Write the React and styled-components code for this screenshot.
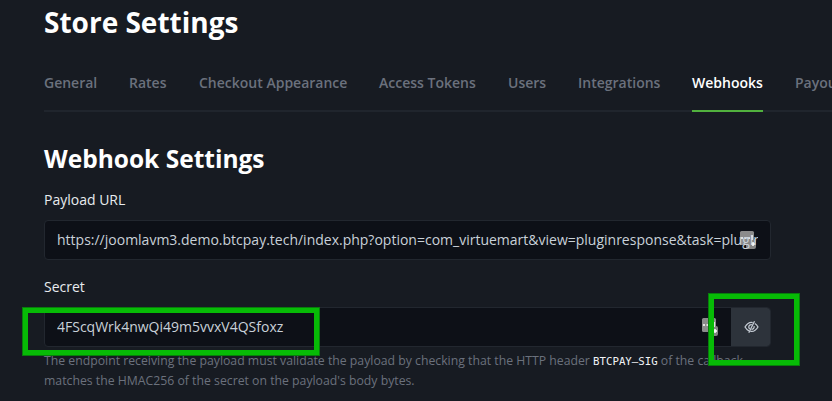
import React from "react";
import styled, { createGlobalStyle } from "styled-components";

const GlobalStyle = createGlobalStyle`
  * { box-sizing: border-box; }
  html, body { margin: 0; background: #171b22; overflow: hidden; }
`;

const Page = styled.main`
  position: relative;
  width: 832px;
  height: 401px;
  overflow: hidden;
  padding: 2px 0 0 44px;
  background: #171b22;
  color: #fff;
  font-family: "Open Sans", "Noto Sans", sans-serif;
  font-size: 14px;
`;

const Title = styled.h1`
  margin: 0;
  font-size: 28px;
  line-height: 40px;
  font-weight: 700;
  white-space: nowrap;
`;

const Tabs = styled.nav`
  display: flex;
  gap: 32px;
  height: 54px;
  margin-top: 16px;
  border-bottom: 2px solid #20252d;
`;

const Tab = styled.a`
  flex: none;
  width: ${(p) => p.$width}px;
  height: 54px;
  padding-top: 15px;
  line-height: 20px;
  font-weight: 600;
  white-space: nowrap;
  color: ${(p) => (p.$active ? "#fff" : "#6b717d")};
  border-bottom: 2px solid ${(p) => (p.$active ? "#51b13e" : "transparent")};
`;

const Heading = styled.h2`
  margin: 29px 0 0;
  font-size: 24.5px;
  line-height: 36px;
  font-weight: 700;
`;

const Field = styled.div`
  width: 727px;
  margin-top: ${(p) => p.$gap}px;
`;

const Label = styled.label`
  display: block;
  height: 30px;
  line-height: 20px;
  color: #e8ebef;
`;

const InputGroup = styled.div`
  display: flex;
  height: 40px;
  border: 1px solid #22272f;
  border-radius: 4px;
  background: #0d1017;
  overflow: hidden;
`;

const InputArea = styled.div`
  position: relative;
  flex: 1;
  min-width: 0;
  padding: 0 12px;
`;

const Value = styled.div`
  position: relative;
  z-index: 1;
  overflow: hidden;
  white-space: nowrap;
  line-height: 38px;
  color: #c9d1d9;
`;

const ManagerIcon = styled.svg`
  position: absolute;
  right: ${(p) => p.$right}px;
  top: 9px;
  width: 17px;
  height: 19px;
`;

const ToggleButton = styled.button`
  display: flex;
  align-items: center;
  justify-content: center;
  width: 39px;
  padding: 0 0 0 1px;
  border: 0;
  background: #2d333b;
  color: #c5ccd4;
`;

const Help = styled.p`
  width: 727px;
  margin: 4px 0 0;
  font-size: 12.25px;
  line-height: 20px;
  color: #6b717d;
  white-space: nowrap;
`;

const Code = styled.code`
  font-family: "DejaVu Sans Mono", monospace;
  font-size: 10.72px;
  line-height: 1;
  color: #f0f3f6;
`;

const Highlight = styled.div`
  position: absolute;
  z-index: 2;
  left: ${(p) => p.$x}px;
  top: ${(p) => p.$y}px;
  width: ${(p) => p.$w}px;
  height: ${(p) => p.$h}px;
  border: 6px solid #07bb06;
  outline: 1px solid #087e0c;
  outline-offset: -1px;
`;

const tabs = [
  ["General", 53],
  ["Rates", 38],
  ["Checkout Appearance", 148],
  ["Access Tokens", 97],
  ["Users", 38],
  ["Integrations", 82],
  ["Webhooks", 71],
  ["Payouts", 54],
];

function PasswordManager({ right }) {
  return (
    <ManagerIcon $right={right} viewBox="0 0 17 19" aria-hidden="true">
      <rect x="1" y="1" width="14" height="14" rx="1.5" fill="#8b8b8b" />
      <rect x="7" y="9" width="10" height="10" rx="2" fill="#858585" />
      <path d="M2 8h2M5.5 8h2M9 8h2M13 5v5M12 14h4M14 12v4" fill="none" stroke="#fff" strokeWidth="1.5" />
    </ManagerIcon>
  );
}

function EyeOff() {
  return (
    <svg width="15" height="14" viewBox="0 0 15 14" fill="none" stroke="currentColor" strokeWidth="1.25" aria-hidden="true">
      <path d="M8.7 2.6C5.3 1.9 2.8 4.1 1 7c1 1.7 2.3 3.1 4 3.9M10.8 3.5C12.2 4.3 13.2 5.5 14 7c-1.9 3.2-4.6 5-7.7 4.3" />
      <path d="M7.8 4.7C5.8 4.4 4.6 5.7 4.8 7.4c.1.7.4 1.1.9 1.5M10.1 6.1c.3 1.7-.8 3.1-2.6 3.2" />
      <path d="M10.5 1.2 4.8 12.7" />
    </svg>
  );
}

export default function App() {
  return (
    <Page>
      <GlobalStyle />
      <Title>Store Settings</Title>
      <Tabs>
        {tabs.map(([name, width]) => (
          <Tab key={name} $width={width} $active={name === "Webhooks"}>{name}</Tab>
        ))}
      </Tabs>
      <Heading>Webhook Settings</Heading>
      <Field $gap={13}>
        <Label>Payload URL</Label>
        <InputGroup>
          <InputArea>
            <Value>https://joomlavm3.demo.btcpay.tech/index.php?option=com_virtuemart&amp;view=pluginresponse&amp;task=pluginresponsereceived</Value>
            <PasswordManager right={14} />
          </InputArea>
        </InputGroup>
      </Field>
      <Field $gap={17}>
        <Label>Secret</Label>
        <InputGroup>
          <InputArea>
            <Value>4FScqWrk4nwQi49m5vvxV4QSfoxz</Value>
            <PasswordManager right={13} />
          </InputArea>
          <ToggleButton aria-label="Hide secret"><EyeOff /></ToggleButton>
        </InputGroup>
      </Field>
      <Help>
        The endpoint receiving the payload must validate the payload by checking that the HTTP header <Code>BTCPAY–SIG</Code> of the callback<br />
        matches the HMAC256 of the secret on the payload's body bytes.
      </Help>
      <Highlight $x={22} $y={307} $w={298} $h={49} />
      <Highlight $x={708} $y={293} $w={92} $h={73} />
    </Page>
  );
}
